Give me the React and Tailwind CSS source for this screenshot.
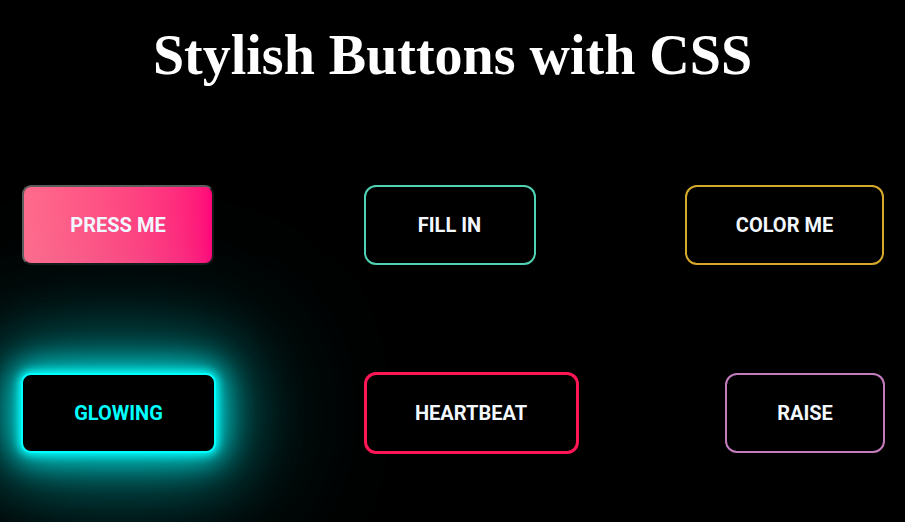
import React from "react";

const label = "font-['Roboto',sans-serif] font-bold text-[20px] uppercase flex items-center justify-center";

const App = () => {
  return (
    <div className="w-full min-h-[522px] bg-black overflow-hidden">
      <h1 className="pt-[27px] text-center font-['Liberation_Serif',serif] font-bold text-[56px] leading-none text-white">
        Stylish Buttons with CSS
      </h1>

      {/* row 1 */}
      <div className="mt-[102px] flex justify-between px-[21px]">
        <button
          className={`${label} ml-px w-[192px] h-[80px] rounded-[9px] border-2 border-t-[#5c5c5c] border-l-[#5c5c5c] border-r-[#161616] border-b-[#161616] bg-linear-to-r from-[#ff6b8c] to-[#ff0479] text-[#f3f8ff]`}
        >
          Press me
        </button>
        <button
          className={`${label} w-[172px] h-[80px] rounded-[12px] border-2 border-[#4fd1b2] bg-black text-[#f3f8ff]`}
        >
          Fill in
        </button>
        <button
          className={`${label} w-[199px] h-[80px] rounded-[12px] border-2 border-[#d7a92b] bg-black text-[#f3f8ff]`}
        >
          Color me
        </button>
      </div>

      {/* row 2 */}
      <div className="mt-[108px] flex justify-between px-[20px]">
        <button
          className={`${label} ml-px w-[195px] h-[80px] rounded-[10px] border-2 border-[#00ffff] bg-black text-[#00ffff] shadow-[0_0_8px_2px_#00ffff,0_0_30px_8px_rgba(0,255,255,0.75),0_0_70px_20px_rgba(0,255,255,0.45),0_0_140px_40px_rgba(0,255,255,0.22)]`}
        >
          Glowing
        </button>
        <button
          className={`${label} ml-px w-[215px] h-[82px] -mt-px rounded-[12px] border-[3px] border-[#ff1654] bg-black text-[#f3f8ff]`}
        >
          Heartbeat
        </button>
        <button
          className={`${label} w-[160px] h-[80px] rounded-[12px] border-2 border-[#c47cbd] bg-black text-[#f3f8ff]`}
        >
          Raise
        </button>
      </div>
    </div>
  );
};

export default App;
